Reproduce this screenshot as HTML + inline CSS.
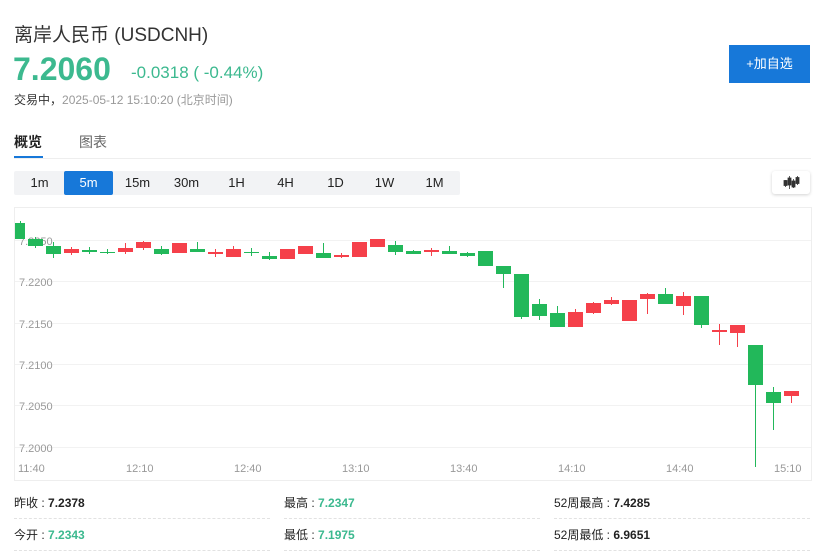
<!DOCTYPE html>
<html><head><meta charset="utf-8">
<style>
*{margin:0;padding:0;box-sizing:border-box}
body{width:826px;height:555px;background:#fff;font-family:"Liberation Sans","Noto Sans CJK SC",sans-serif;position:relative;overflow:hidden;color:#222}
.a{position:absolute;white-space:nowrap}
.tab{position:absolute;top:171px;height:24px;width:49px;text-align:center;line-height:24px;font-size:13px;color:#222}
.st{position:absolute;font-size:12px;color:#222}
.dl{position:absolute;height:0;border-top:1px dashed #e2e2e2}
</style></head><body>
<div class="a" style="left:14px;top:20px;font-size:19px;color:#333">离岸人民币 (USDCNH)</div>
<div class="a" style="left:13px;top:51px;font-size:32px;font-weight:bold;color:#3cb98f">7.2060</div>
<div class="a" style="left:131px;top:63px;font-size:17px;color:#3cb98f">-0.0318 ( -0.44%)</div>
<div class="a" style="left:14px;top:91px;font-size:12px;color:#999"><span style="color:#333">交易中，</span>2025-05-12 15:10:20 (北京时间)</div>
<div class="a" style="left:729px;top:45px;width:81px;height:38px;background:#1778d9;color:#fff;font-size:13px;text-align:center;line-height:38px">+加自选</div>
<div class="a" style="left:14px;top:132px;font-size:14px;font-weight:bold;color:#222">概览</div>
<div class="a" style="left:79px;top:132px;font-size:14px;color:#666">图表</div>
<div class="a" style="left:14px;top:156px;width:29px;height:3px;background:#1778d9"></div>
<div class="a" style="left:14px;top:158px;width:797px;height:1px;background:#eee"></div>
<div class="a" style="left:14px;top:171px;width:446px;height:24px;background:#f2f3f5;border-radius:2px"></div>
<div class="tab" style="left:15px">1m</div>
<div class="tab" style="left:64px;background:#1778d9;color:#fff;border-radius:2px">5m</div>
<div class="tab" style="left:113px">15m</div>
<div class="tab" style="left:162px">30m</div>
<div class="tab" style="left:212px">1H</div>
<div class="tab" style="left:261px">4H</div>
<div class="tab" style="left:311px">1D</div>
<div class="tab" style="left:360px">1W</div>
<div class="tab" style="left:410px">1M</div>
<div class="a" style="left:772px;top:171px;width:38px;height:23px;background:#fff;border-radius:3px;box-shadow:0 1px 3px rgba(0,0,0,.18)">
<svg width="38" height="23"><g fill="#333" stroke="#333" stroke-width="0.8"><line x1="13.5" y1="9" x2="13.5" y2="16"/><rect x="12" y="9.5" width="3" height="5"/><line x1="17.5" y1="5" x2="17.5" y2="18"/><rect x="16" y="7" width="3" height="7"/><line x1="21.5" y1="8" x2="21.5" y2="17"/><rect x="20" y="10" width="3" height="6"/><line x1="25.5" y1="5" x2="25.5" y2="14"/><rect x="24" y="6.5" width="3" height="6"/></g></svg></div>
<svg class="a" style="left:0;top:0" width="826" height="555">
<rect x="14.5" y="207.5" width="797" height="273" fill="none" stroke="#eee"/>
<g stroke="#f2f2f2"><line x1="15" y1="240.5" x2="811" y2="240.5"/><line x1="15" y1="281.5" x2="811" y2="281.5"/><line x1="15" y1="323.5" x2="811" y2="323.5"/><line x1="15" y1="364.5" x2="811" y2="364.5"/><line x1="15" y1="405.5" x2="811" y2="405.5"/><line x1="15" y1="447.5" x2="811" y2="447.5"/></g>
<g font-size="11" fill="#999" font-family="Liberation Sans,sans-serif"><text x="19" y="245">7.2250</text><text x="19" y="286">7.2200</text><text x="19" y="328">7.2150</text><text x="19" y="369">7.2100</text><text x="19" y="410">7.2050</text><text x="19" y="452">7.2000</text>
<text x="18" y="472">11:40</text><text x="126" y="472">12:10</text><text x="234" y="472">12:40</text><text x="342" y="472">13:10</text><text x="450" y="472">13:40</text><text x="558" y="472">14:10</text><text x="666" y="472">14:40</text><text x="774" y="472">15:10</text></g>
</svg>
<div class="st" style="left:14px;top:494px">昨收 : <b>7.2378</b></div>
<div class="st" style="left:284px;top:494px">最高 : <b style="color:#3cb98f">7.2347</b></div>
<div class="st" style="left:554px;top:494px">52周最高 : <b>7.4285</b></div>
<div class="st" style="left:14px;top:526px">今开 : <b style="color:#3cb98f">7.2343</b></div>
<div class="st" style="left:284px;top:526px">最低 : <b style="color:#3cb98f">7.1975</b></div>
<div class="st" style="left:554px;top:526px">52周最低 : <b>6.9651</b></div>
<div class="dl" style="left:14px;top:518px;width:256px"></div>
<div class="dl" style="left:284px;top:518px;width:256px"></div>
<div class="dl" style="left:554px;top:518px;width:256px"></div>
<div class="dl" style="left:14px;top:550px;width:256px"></div>
<div class="dl" style="left:284px;top:550px;width:256px"></div>
<div class="dl" style="left:554px;top:550px;width:256px"></div>
<svg class="a" style="left:0;top:0" width="826" height="555">
<g stroke-width="1">
<g fill="#22b85a" stroke="#22b85a">
<rect x="15" y="223" width="10" height="16" stroke="none"/><line x1="20.5" y1="221" x2="20.5" y2="239"/>
<rect x="28" y="239" width="15" height="7" stroke="none"/><line x1="35.5" y1="237" x2="35.5" y2="248"/>
<rect x="46" y="246" width="15" height="8" stroke="none"/><line x1="53.5" y1="242" x2="53.5" y2="258"/>
<rect x="82" y="250" width="15" height="2" stroke="none"/><line x1="89.5" y1="247" x2="89.5" y2="254"/>
<rect x="100" y="252" width="15" height="1" stroke="none"/><line x1="107.5" y1="249" x2="107.5" y2="254"/>
<rect x="154" y="249" width="15" height="5" stroke="none"/><line x1="161.5" y1="246" x2="161.5" y2="255"/>
<rect x="190" y="249" width="15" height="3" stroke="none"/><line x1="197.5" y1="242" x2="197.5" y2="252"/>
<rect x="244" y="252" width="15" height="1" stroke="none"/><line x1="251.5" y1="248" x2="251.5" y2="256"/>
<rect x="262" y="256" width="15" height="3" stroke="none"/><line x1="269.5" y1="252" x2="269.5" y2="260"/>
<rect x="316" y="253" width="15" height="5" stroke="none"/><line x1="323.5" y1="243" x2="323.5" y2="258"/>
<rect x="388" y="245" width="15" height="7" stroke="none"/><line x1="395.5" y1="241" x2="395.5" y2="255"/>
<rect x="406" y="251" width="15" height="3" stroke="none"/><line x1="413.5" y1="250" x2="413.5" y2="254"/>
<rect x="442" y="251" width="15" height="3" stroke="none"/><line x1="449.5" y1="246" x2="449.5" y2="254"/>
<rect x="460" y="253" width="15" height="3" stroke="none"/><line x1="467.5" y1="252" x2="467.5" y2="257"/>
<rect x="478" y="251" width="15" height="15" stroke="none"/>
<rect x="496" y="266" width="15" height="8" stroke="none"/><line x1="503.5" y1="266" x2="503.5" y2="288"/>
<rect x="514" y="274" width="15" height="43" stroke="none"/><line x1="521.5" y1="274" x2="521.5" y2="319"/>
<rect x="532" y="304" width="15" height="12" stroke="none"/><line x1="539.5" y1="299" x2="539.5" y2="320"/>
<rect x="550" y="313" width="15" height="14" stroke="none"/><line x1="557.5" y1="306" x2="557.5" y2="327"/>
<rect x="658" y="294" width="15" height="10" stroke="none"/><line x1="665.5" y1="288" x2="665.5" y2="304"/>
<rect x="694" y="296" width="15" height="29" stroke="none"/><line x1="701.5" y1="296" x2="701.5" y2="328"/>
<rect x="748" y="345" width="15" height="40" stroke="none"/><line x1="755.5" y1="345" x2="755.5" y2="467"/>
<rect x="766" y="392" width="15" height="11" stroke="none"/><line x1="773.5" y1="387" x2="773.5" y2="430"/>
</g>
<g fill="#f5404a" stroke="#f5404a">
<rect x="64" y="249" width="15" height="4" stroke="none"/><line x1="71.5" y1="247" x2="71.5" y2="255"/>
<rect x="118" y="248" width="15" height="4" stroke="none"/><line x1="125.5" y1="243" x2="125.5" y2="254"/>
<rect x="136" y="242" width="15" height="6" stroke="none"/><line x1="143.5" y1="241" x2="143.5" y2="250"/>
<rect x="172" y="243" width="15" height="10" stroke="none"/>
<rect x="208" y="252" width="15" height="2" stroke="none"/><line x1="215.5" y1="249" x2="215.5" y2="257"/>
<rect x="226" y="249" width="15" height="8" stroke="none"/><line x1="233.5" y1="246" x2="233.5" y2="257"/>
<rect x="280" y="249" width="15" height="10" stroke="none"/>
<rect x="298" y="246" width="15" height="8" stroke="none"/>
<rect x="334" y="255" width="15" height="2" stroke="none"/><line x1="341.5" y1="253" x2="341.5" y2="258"/>
<rect x="352" y="242" width="15" height="15" stroke="none"/>
<rect x="370" y="239" width="15" height="8" stroke="none"/>
<rect x="424" y="250" width="15" height="2" stroke="none"/><line x1="431.5" y1="248" x2="431.5" y2="256"/>
<rect x="568" y="312" width="15" height="15" stroke="none"/><line x1="575.5" y1="309" x2="575.5" y2="327"/>
<rect x="586" y="303" width="15" height="10" stroke="none"/><line x1="593.5" y1="302" x2="593.5" y2="314"/>
<rect x="604" y="300" width="15" height="4" stroke="none"/><line x1="611.5" y1="297" x2="611.5" y2="305"/>
<rect x="622" y="300" width="15" height="21" stroke="none"/>
<rect x="640" y="294" width="15" height="5" stroke="none"/><line x1="647.5" y1="293" x2="647.5" y2="314"/>
<rect x="676" y="296" width="15" height="10" stroke="none"/><line x1="683.5" y1="292" x2="683.5" y2="315"/>
<rect x="712" y="330" width="15" height="2" stroke="none"/><line x1="719.5" y1="324" x2="719.5" y2="345"/>
<rect x="730" y="325" width="15" height="8" stroke="none"/><line x1="737.5" y1="325" x2="737.5" y2="347"/>
<rect x="784" y="391" width="15" height="5" stroke="none"/><line x1="791.5" y1="391" x2="791.5" y2="403"/>
</g></g></svg>
</body></html>
